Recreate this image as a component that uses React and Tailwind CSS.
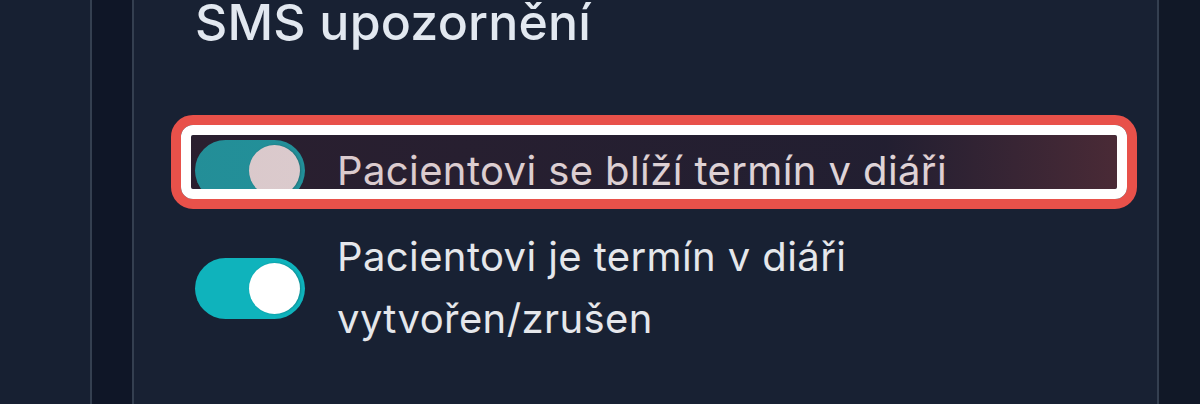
import React from "react";

const Toggle = ({ on = true }) => (
  <div
    className={`relative w-[110px] h-[61px] shrink-0 rounded-full ${
      on ? "bg-[#0fb3bc]" : "bg-[#374151]"
    }`}
  >
    <div
      className={`absolute top-[5px] w-[51px] h-[51px] rounded-full bg-white shadow-[1px_0_2px_rgba(0,0,0,0.25)] ${
        on ? "right-[5px]" : "left-[5px]"
      }`}
    />
  </div>
);

const App = () => {
  return (
    <div
      className="flex w-[1200px] h-[404px] overflow-hidden bg-[#111827]"
      style={{ fontFamily: "Inter, 'Noto Sans', sans-serif" }}
    >
      <div className="w-[90px] shrink-0 bg-[#172032]" />
      <div className="w-[44px] shrink-0 bg-[#0f1627] border-x-2 border-[#343f50]" />

      <section className="w-[1025px] shrink-0 bg-[#182133] border-r-2 border-[#343f50] pl-[61px]">
        <h2 className="text-[50px] leading-[44px] font-medium text-[#e2e8f0] tracking-[0.2px]">
          SMS upozornění
        </h2>

        <div className="mt-[96px] flex flex-col gap-[25px]">
          {/* highlighted row */}
          <div className="relative flex items-center gap-[32px]">
            <Toggle />
            <p className="text-[40px] leading-[60px] tracking-[0.4px] text-white max-w-[720px]">
              Pacientovi se blíží termín v diáři
            </p>
            <div className="pointer-events-none absolute -left-[24px] -top-[25px] w-[966px] h-[94px] rounded-[22px] border-[10px] border-[#e8514a]">
              <div className="h-full rounded-[12px] border-[10px] border-white">
                <div className="h-full rounded-[3px] bg-gradient-to-r from-[rgba(100,25,35,0.24)] via-[rgba(80,20,40,0.18)] via-75% to-[rgba(170,60,60,0.34)]" />
              </div>
            </div>
          </div>

          <div className="flex items-center gap-[32px]">
            <Toggle />
            <p className="text-[40px] leading-[62px] tracking-[0.4px] text-[#e5e7eb] max-w-[720px]">
              Pacientovi je termín v diáři vytvořen/zrušen
            </p>
          </div>
        </div>
      </section>

      <div className="flex-1 bg-[#111827]" />
    </div>
  );
};

export default App;
